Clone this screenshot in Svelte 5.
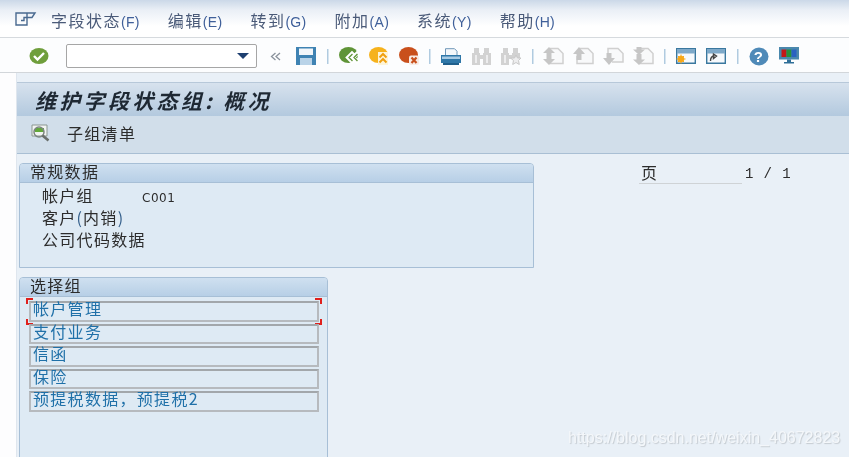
<script>
  const menus = ["字段状态|(F)", "编辑|(E)", "转到|(G)", "附加|(A)", "系统|(Y)", "帮助|(H)"].map((s) => s.split("|"));
  const groups = ["帐户管理", "支付业务", "信函", "保险", "预提税数据，预提税2"];
</script>

<div class="page">
  <header class="menubar">
    <svg class="menu-icon" width="22" height="14" viewBox="0 0 22 14" fill="none" stroke="#4a6a90" stroke-width="1.4">
      <path d="M1 1h11v12H1zM1 1h19l-3 4.500h-8v3h-3" />
    </svg>
    {#each menus as m}
      <span class="menu-item">{m[0]}<span class="key">{m[1]}</span></span>
    {/each}
  </header>

  <div class="toolbar">
    <span class="tool">
      <svg width="20" height="18" viewBox="0 0 20 18">
        <ellipse cx="10" cy="9" rx="9.500" ry="8" fill="#6f9e3c" />
        <path d="M5 9l3.500 3.500L15 6" fill="none" stroke="#fff" stroke-width="2.400" />
      </svg>
    </span>
    <div class="command">
      <svg width="12" height="6" viewBox="0 0 12 6"><path d="M0 0h12L6 6z" fill="#1e3f70" /></svg>
    </div>
    <span class="tool chevrons">
      <svg width="11" height="9" viewBox="0 0 11 9" fill="none" stroke="#8a929c" stroke-width="1.300">
        <path d="M5.500 1L1.500 4.500l4 3.500M10 1L6 4.500 10 8" />
      </svg>
    </span>
    <span class="tool">
      <svg width="20" height="18" viewBox="0 0 20 18">
        <path d="M0 0h20v18H0z" fill="#3f83b3" />
        <path d="M3 1.500h14v6.500H3z" fill="#f2f6fa" />
        <path d="M4 11h12v7H4z" fill="#b9d3e8" />
      </svg>
    </span>
    <i class="sep"></i>
    <span class="tool">
      <svg width="20" height="18" viewBox="0 0 20 18">
        <ellipse cx="9.500" cy="8" rx="9.500" ry="8" fill="#5f9437" />
        <g fill="none" stroke-linecap="square">
          <path d="M13 6.500l-4 4 4 4M18 6.500l-4 4 4 4" stroke="#fff" stroke-width="4" />
          <path d="M13 7.500l-3 3 3 3M18 7.500l-3 3 3 3" stroke="#5f9437" stroke-width="1.300" />
        </g>
      </svg>
    </span>
    <span class="tool">
      <svg width="20" height="18" viewBox="0 0 20 18">
        <ellipse cx="9.500" cy="8" rx="9.500" ry="8" fill="#f6b21c" />
        <path d="M9 5h10v13H9z" fill="#fdf4d8" />
        <path d="M10.500 10.500L14 7l3.500 3.500M10.500 15.500L14 12l3.500 3.500" fill="none" stroke="#f0a010" stroke-width="2" />
      </svg>
    </span>
    <span class="tool">
      <svg width="20" height="18" viewBox="0 0 20 18">
        <ellipse cx="9.500" cy="8" rx="9.500" ry="8" fill="#c9501c" />
        <rect x="10" y="8.500" width="10" height="9.500" rx="2" fill="#f8ebe4" />
        <path d="M12.500 10.500l5 5.500M17.500 10.500l-5 5.500" stroke="#c9501c" stroke-width="2.200" />
      </svg>
    </span>
    <i class="sep"></i>
    <span class="tool">
      <svg width="20" height="17" viewBox="0 0 20 17">
        <path d="M4.500 8V.7h9l2.500 2.500V8" fill="#f4f7fa" stroke="#6f97b8" />
        <path d="M0 7h20v8H0z" fill="#2f77a8" />
        <path d="M1 8.500h18V11H1z" fill="#a8cbe4" />
        <path d="M2 15h16v2H2z" fill="#1f5f8c" />
      </svg>
    </span>
    <span class="tool">
      <svg width="19" height="18" viewBox="0 0 19 18" fill="#d2d2d2">
        <path d="M2 1h5v6H2zM12 1h5v6h-5zM0 6h8v12H0zM11 6h8v12h-8zM7 8h5v4H7z" />
        <path d="M3 8h2v8H3zM14 8h2v8h-2z" fill="#ededee" />
      </svg>
    </span>
    <span class="tool">
      <svg width="20" height="18" viewBox="0 0 20 18" fill="#d2d2d2">
        <path d="M2 1h5v6H2zM12 1h5v6h-5zM0 6h8v12H0zM11 6h8v5h-8zM7 8h5v4H7z" />
        <path d="M3 8h2v8H3z" fill="#ededee" />
        <path d="M15 8l1.500 3H20l-2.500 2.500.8 4-3.300-2-3.300 2 .8-4L9.500 11h4z" fill="#ededee" stroke="#c8c8c8" />
      </svg>
    </span>
    <i class="sep"></i>
    <span class="tool">
      <svg width="21" height="18" viewBox="0 0 21 18">
        <path d="M7 1.500h8l5 5V16.500H7" fill="#f8f9fa" stroke="#d0d0d0" stroke-width="1.500" />
        <path d="M6 0L0 6h12zM6 18L0 12h12z" fill="#c6c6c6" />
        <path d="M3.500 5h5v8h-5z" fill="#c6c6c6" />
      </svg>
    </span>
    <span class="tool">
      <svg width="21" height="18" viewBox="0 0 21 18">
        <path d="M7 1.500h8l5 5V16.500H4V9" fill="#f8f9fa" stroke="#d0d0d0" stroke-width="1.500" />
        <path d="M6 0L0 7h12z" fill="#c6c6c6" />
        <path d="M3.500 6h5v7h-5z" fill="#c6c6c6" />
      </svg>
    </span>
    <span class="tool">
      <svg width="21" height="18" viewBox="0 0 21 18">
        <path d="M7 1.500h8l5 5V15H9M5 9V1.500h3" fill="#f8f9fa" stroke="#d0d0d0" stroke-width="1.500" />
        <path d="M6 18L0 11h12z" fill="#c6c6c6" />
        <path d="M3.500 6h5v6h-5z" fill="#c6c6c6" />
      </svg>
    </span>
    <span class="tool">
      <svg width="21" height="18" viewBox="0 0 21 18">
        <path d="M7 1.500h8l5 5V16.500H7" fill="#f8f9fa" stroke="#d0d0d0" stroke-width="1.500" />
        <path d="M6 8L0 2.500h12zM6 18l-6-5.500h12z" fill="#c6c6c6" />
        <path d="M3.500 0h5v3h-5zM3.500 7h5v6h-5z" fill="#c6c6c6" />
      </svg>
    </span>
    <i class="sep"></i>
    <span class="tool">
      <svg width="20" height="16" viewBox="0 0 20 16">
        <path d="M.7.700h18.600v14.600H.7z" fill="#f6f9fc" stroke="#3a789f" stroke-width="1.400" />
        <path d="M1 1h18v4.500H1z" fill="#7ea9c9" />
        <circle cx="5" cy="11" r="3.200" fill="#f8a818" />
        <path d="M5 6.500v9M.5 11h9M2 8l6 6M8 8l-6 6" stroke="#f8a818" />
      </svg>
    </span>
    <span class="tool">
      <svg width="20" height="16" viewBox="0 0 20 16">
        <path d="M.7.700h18.600v14.600H.7z" fill="#f6f9fc" stroke="#3a789f" stroke-width="1.400" />
        <path d="M1 1h18v4.500H1z" fill="#7ea9c9" />
        <path d="M4.500 13c0-3.500 1.500-5 4-5M7.500 6l3 2-3 2.500z" fill="none" stroke="#444" stroke-width="1.400" />
      </svg>
    </span>
    <i class="sep"></i>
    <span class="tool">
      <svg width="20" height="19" viewBox="0 0 20 19">
        <ellipse cx="10" cy="9.500" rx="9.500" ry="9" fill="#4f8ab8" />
        <text x="10" y="15" class="qmark">?</text>
      </svg>
    </span>
    <span class="tool monitor">
      <svg width="20" height="17" viewBox="0 0 20 17">
        <path d="M0 0h20v12.500H0z" fill="#4a88ad" />
        <path d="M2.500 2.500h5v7.500h-5z" fill="#c41818" />
        <path d="M7.500 2.500h5v7.500h-5z" fill="#27933a" />
        <path d="M12.500 2.500h5v7.500h-5z" fill="#2a62c0" />
        <path d="M8 12.500h4V15H8zM5 15h10v1.500H5z" fill="#2f6f98" />
      </svg>
    </span>
  </div>

  <main class="content">
    <div class="title-bar"><h1>维护字段状态组: 概况</h1></div>
    <div class="app-bar">
      <svg width="20" height="18" viewBox="0 0 20 18">
        <path d="M1 1h15v11H1z" fill="#f2f4f2" stroke="#8a9690" />
        <path d="M4 4h9v4H4z" fill="#62a83a" />
        <circle cx="8" cy="8" r="5" fill="none" stroke="#7b8580" stroke-width="1.500" />
        <path d="M11.500 11.500l6 5" stroke="#6a6f6c" stroke-width="2.600" />
      </svg>
      <span>子组清单</span>
    </div>

    <div class="top">
      <section class="panel general">
        <h2>常规数据</h2>
        <div class="panel-body rows">
          <div class="line"><span class="label">帐户组</span><span class="value">C001</span></div>
          <div class="line">客户<span class="paren">(</span>内销<span class="paren">)</span></div>
          <div class="line">公司代码数据</div>
        </div>
      </section>
      <div class="pager">
        <span class="pager-label">页</span>
        <span class="pager-num">1 / 1</span>
      </div>
    </div>

    <section class="panel select">
      <h2>选择组</h2>
      <div class="panel-body list">
        {#each groups as g, i}
          <div class="group" class:focused={i === 0}>
            {g}
            {#if i === 0}
              <i class="corner tl"></i><i class="corner tr"></i><i class="corner bl"></i><i class="corner br"></i>
            {/if}
          </div>
        {/each}
      </div>
    </section>
  </main>

  <div class="watermark">https://blog.csdn.net/weixin_40672823</div>
</div>

<style>
  :global(body) {
    margin: 0;
    background: #fdfdfe;
  }
  .page {
    position: relative;
    width: 849px;
    height: 457px;
    overflow: hidden;
    font-family: "Noto Sans CJK SC", "Liberation Sans", sans-serif;
    font-size: 16px;
    letter-spacing: 1.300px;
    color: #2c2c2c;
    filter: blur(0.35px);
  }
  .menubar {
    height: 38px;
    box-sizing: border-box;
    border-bottom: 1px solid #d6dade;
    display: flex;
    align-items: center;
    padding-left: 15px;
    background: linear-gradient(#cbd8e8 0, #eaeff6 10px, #fff 26px);
    color: #4a5a78;
  }
  .menu-icon {
    margin-right: 14px;
  }
  .menu-item {
    margin: 4px 28px 0 0;
    white-space: nowrap;
    line-height: 20px;
    letter-spacing: 1.500px;
  }
  .key {
    font-family: "Liberation Sans", sans-serif;
    font-size: 14px;
    letter-spacing: 0.300px;
    color: #40609a;
  }
  .toolbar {
    height: 35px;
    box-sizing: border-box;
    border-bottom: 1px solid #d2d6da;
    display: flex;
    align-items: center;
    padding: 2px 0 0 24px;
    background: #fcfdfe;
  }
  .tool {
    flex: 0 0 30px;
    display: flex;
    justify-content: center;
    align-items: center;
  }
  .sep {
    flex: 0 0 12.500px;
    height: 15px;
    background: linear-gradient(#b0cbe0, #b0cbe0) center / 1.500px 100% no-repeat;
  }
  .command {
    margin: 0 3px 0 12px;
    width: 191px;
    height: 24px;
    box-sizing: border-box;
    border: 1px solid #a6a6a6;
    border-radius: 2px;
    background: #fff;
    display: flex;
    align-items: center;
    justify-content: flex-end;
    padding-right: 7px;
  }
  .chevrons {
    margin-right: 1px;
  }
  .qmark {
    font: bold 15px "Liberation Sans", sans-serif;
    fill: #fff;
    text-anchor: middle;
  }
  .monitor {
    margin-top: -2px;
  }
  .content {
    margin-left: 16px;
    height: 384px;
    box-sizing: border-box;
    padding-top: 9px;
    background: #e9f0f7;
    border-left: 1px solid #dfe6ee;
  }
  .title-bar {
    height: 34px;
    box-sizing: border-box;
    display: flex;
    align-items: center;
    padding-left: 18px;
    background: linear-gradient(#d7e2ee, #b3c9de);
    border-top: 1px solid #b7c8d9;
  }
  h1 {
    margin: 0;
    font-size: 21px;
    font-style: italic;
    font-weight: 700;
    letter-spacing: 3.300px;
    color: #1e2833;
    line-height: 30px;
  }
  .app-bar {
    height: 38px;
    box-sizing: border-box;
    display: flex;
    align-items: center;
    padding: 0 0 3px 14px;
    gap: 16px;
    background: #d1deea;
    border-bottom: 1px solid #a9bfd4;
  }
  .top {
    display: flex;
    padding: 9px 0 0 2px;
  }
  .panel {
    box-sizing: border-box;
    border: 1px solid #a7bfd6;
    border-radius: 4px 4px 0 0;
    background: #deeaf4;
  }
  h2 {
    margin: 0;
    height: 19px;
    box-sizing: border-box;
    padding-left: 10px;
    font-size: 16px;
    font-weight: 400;
    line-height: 15px;
    letter-spacing: 1.300px;
    color: #2c2c2c;
    background: linear-gradient(#cfe0f0, #b7cfe6);
    border-bottom: 1px solid #a7bfd6;
    border-radius: 3px 3px 0 0;
  }
  .general {
    width: 515px;
    height: 105px;
  }
  .rows {
    padding: 1px 0 0 22px;
  }
  .line {
    height: 22px;
    line-height: 22px;
    white-space: nowrap;
  }
  .label {
    display: inline-block;
    width: 100px;
  }
  .value {
    font-family: "DejaVu Sans", sans-serif;
    font-size: 12px;
    letter-spacing: 0.500px;
  }
  .paren {
    color: #35608c;
    letter-spacing: 1px;
  }
  .pager {
    margin-left: 105px;
    display: flex;
    align-items: flex-start;
    gap: 3px;
  }
  .pager-label {
    width: 103px;
    height: 21px;
    box-sizing: border-box;
    padding-left: 2px;
    line-height: 18px;
    border-bottom: 1px solid #cfd3d6;
  }
  .pager-num {
    font-family: "Liberation Mono", monospace;
    font-size: 14px;
    letter-spacing: 0.900px;
    line-height: 22px;
    white-space: nowrap;
  }
  .select {
    margin: 9px 0 0 2px;
    width: 309px;
    height: 200px;
  }
  .list {
    padding: 4px 0 0 9px;
    display: flex;
    flex-direction: column;
    gap: 2px;
  }
  .group {
    position: relative;
    width: 290px;
    height: 20.500px;
    box-sizing: border-box;
    border: 2px solid #b6babe;
    border-top-color: #a2a7ab;
    padding-left: 2px;
    line-height: 10px;
    white-space: nowrap;
    color: #1f70a8;
  }
  .corner {
    position: absolute;
    width: 5px;
    height: 4px;
    border: 0 solid #e0201c;
  }
  .tl { left: -5px; top: -5px; border-width: 2px 0 0 2px; }
  .tr { right: -5px; top: -5px; border-width: 2px 2px 0 0; }
  .bl { left: -5px; bottom: -5px; border-width: 0 0 2px 2px; }
  .br { right: -5px; bottom: -5px; border-width: 0 2px 2px 0; }
  .watermark {
    position: absolute;
    left: 568px;
    top: 429px;
    font-family: "Liberation Sans", sans-serif;
    font-size: 16px;
    letter-spacing: 0;
    color: #f4f7fa;
    text-shadow: 1px 1px 1px #c4cad0;
    white-space: nowrap;
  }
</style>
